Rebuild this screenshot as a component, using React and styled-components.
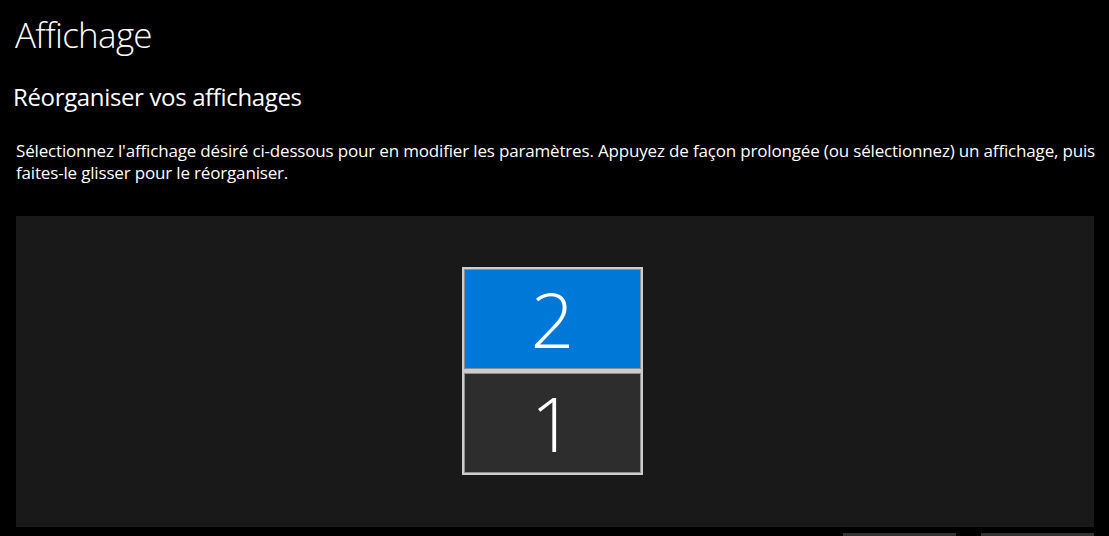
import React from "react";
import styled, { createGlobalStyle } from "styled-components";

const GlobalStyle = createGlobalStyle`
  html, body {
    margin: 0;
    padding: 0;
    background: #000;
    overflow: hidden;
  }
  body {
    font-family: "Open Sans", "Noto Sans", sans-serif;
    color: #fff;
  }
`;

const Page = styled.div`
  width: 1109px;
  height: 536px;
  padding: 0 15px 0 16px;
  box-sizing: border-box;
  display: flex;
  flex-direction: column;
  overflow: hidden;
`;

const Title = styled.h1`
  margin: 13px 0 0 -1px;
  font-size: 35px;
  font-weight: 300;
  line-height: 44px;
  letter-spacing: -0.7px;
`;

const SectionTitle = styled.h2`
  margin: 25px 0 0 -3px;
  font-size: 24px;
  font-weight: 400;
  line-height: 30px;
  letter-spacing: -0.35px;
`;

const Description = styled.p`
  margin: 28px -6px 0 0;
  font-size: 17px;
  line-height: 22px;
  letter-spacing: -0.17px;
`;

const Arrangement = styled.div`
  margin-top: 32px;
  height: 311px;
  flex-shrink: 0;
  background: #191919;
  display: flex;
  justify-content: center;
  padding-top: 51px;
  box-sizing: border-box;
`;

const MonitorStack = styled.div`
  display: flex;
  flex-direction: column;
  margin-left: -5px;
`;

const Monitor = styled.div`
  width: 181px;
  height: 104px;
  box-sizing: border-box;
  border: 2px solid #cdcdcd;
  box-shadow: inset 0 0 0 1px #8e8e8e;
  background: ${(p) => (p.$active ? "#0078d7" : "#2d2d2d")};
  display: flex;
  align-items: center;
  justify-content: center;
  font-size: 76px;
  font-weight: 300;
  line-height: 1;
  color: #fff;
`;

const ButtonRow = styled.div`
  display: flex;
  justify-content: flex-end;
  gap: 25px;
  margin-top: 6px;
  flex-shrink: 0;
`;

const Button = styled.div`
  width: 113px;
  height: 32px;
  background: #333;
`;

export default function App() {
  return (
    <>
      <GlobalStyle />
      <Page>
        <Title>Affichage</Title>
        <SectionTitle>Réorganiser vos affichages</SectionTitle>
        <Description>
          Sélectionnez l'affichage désiré ci-dessous pour en modifier les paramètres. Appuyez de façon prolongée (ou sélectionnez) un affichage, puis faites-le glisser pour le réorganiser.
        </Description>
        <Arrangement>
          <MonitorStack>
            <Monitor $active>2</Monitor>
            <Monitor>1</Monitor>
          </MonitorStack>
        </Arrangement>
        <ButtonRow>
          <Button />
          <Button />
        </ButtonRow>
      </Page>
    </>
  );
}
